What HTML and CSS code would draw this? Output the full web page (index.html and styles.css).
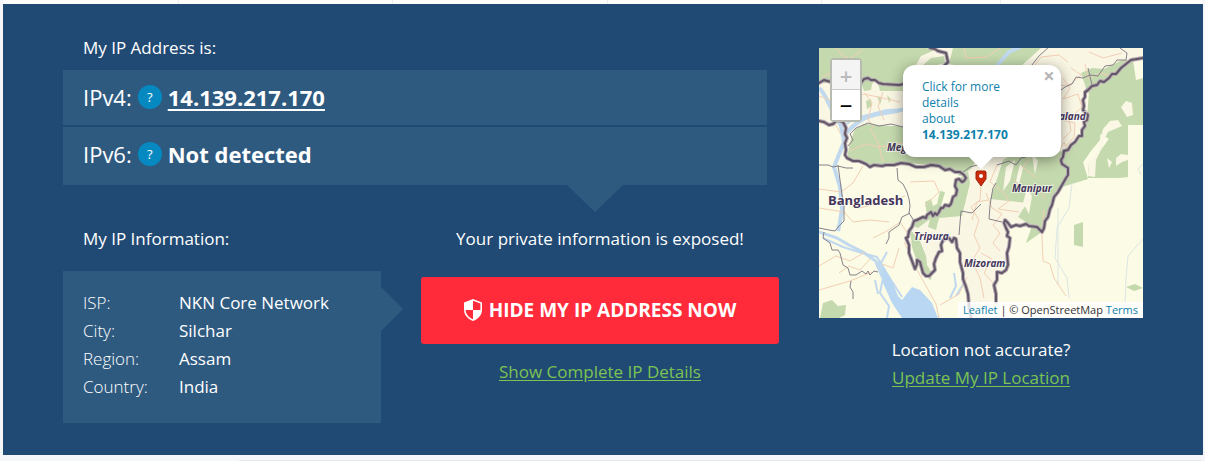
FILE: index.html
```html
<!DOCTYPE html>
<html lang="en">
<head>
<meta charset="utf-8">
<title>My IP Address</title>
<link rel="stylesheet" href="styles.css">
</head>
<body>
<div class="strip strip-top"><span></span><span></span><span></span><span></span><span></span><span></span></div>
<main class="panel">
  <div class="details">
    <h2 class="label">My IP Address is:</h2>
    <div class="addresses">
      <div class="address"><span class="version">IPv4:</span><button class="help" type="button" aria-label="About IPv4">?</button><a class="value" href="#">14.139.217.170</a></div>
      <div class="address"><span class="version">IPv6:</span><button class="help" type="button" aria-label="About IPv6">?</button><span class="value">Not detected</span></div>
    </div>
    <div class="lower">
      <section>
        <h2 class="label">My IP Information:</h2>
        <div class="info">
          <table>
            <tr><th scope="row">ISP:</th><td>NKN Core Network</td></tr>
            <tr><th scope="row">City:</th><td>Silchar</td></tr>
            <tr><th scope="row">Region:</th><td>Assam</td></tr>
            <tr><th scope="row">Country:</th><td>India</td></tr>
          </table>
        </div>
      </section>
      <section class="action">
        <p>Your private information is exposed!</p>
        <button class="hide-ip" type="button">
          <svg class="shield" viewBox="0 0 18 22" aria-hidden="true"><path d="M9 0 18 3.500V11c0 5-4 9-9 11-5-2-9-6-9-11V3.500z" fill="#fff"/><path d="M9 1.800 16.400 4.600V11H9zM9 11v9.200C5 18.500 1.800 15.200 1.600 11z" fill="#ff2b3a"/></svg>
          HIDE MY IP ADDRESS NOW</button>
        <a class="green" href="#">Show Complete IP Details</a>
      </section>
    </div>
  </div>
  <aside class="location">
    <div class="map">
      <svg class="tiles" viewBox="0 0 324 270" preserveAspectRatio="xMidYMid slice" role="img" aria-label="Map of Silchar and surroundings">
        <defs>
          <path id="borders" d="M0 35 5 32 12 34 25 33 42 35 45 31 49 30 52 32 56 32 60 35 64 36 80 37 91 35 120 23 129 14 127 5 119 3 116 1 111 0M0 73 5 74 10 77 14 76 18 72 24 74 27 80 26 86 28 90 26 95 27 102 26 107 28 110 34 113 40 113 47 116 51 119 55 117 63 118 67 117 75 117 82 115 90 116 97 119 105 119 112 117 120 118 126 122 131 121 136 124 141 124 145 127 147 130 145 133 143 134 140 131 137 132 136 138 138 142 137 147 134 149 132 156 130 158 126 157 124 160 122 160 120 164 118 167 116 165 114 168 112 164 108 167 107 170 104 169 98 172 95 173 93 179 90 183 89 189 87 190 90 197 90 205 93 213 96 221 98 216 98 212 101 214 104 225 107 228 110 228 116 222 115 216 117 210 120 204 123 203 122 197 124 192 130 190 133 194 135 190 137 191 138 200 141 205 141 214 144 225 144 231 147 239 149 246 150 258 152 270M324 10 318 11 312 12 307 16 302 20 297 26 293 26 290 30 285 34 281 33 278 37 273 38 268 43 266 44 266 49 264 52 265 58 264 62 269 67 268 72 265 74 266 78 263 82 263 88 260 88 256 94 252 97 249 102 245 103 244 109 242 112 243 116 249 120 249 127 247 130 243 137 239 144 235 149 233 157 231 161 229 169 226 173 225 180 223 184 218 179 210 178 207 176 201 178 197 177 192 179 189 175 186 172 185 175 187 180 189 184 188 188 191 190 190 199 188 205 189 217 187 222 183 225 178 224 178 232 175 237 177 246 177 254"/>
        </defs>
        <rect width="324" height="270" fill="#fcfbe5"/>
        <path d="M0 35 42 35 50 30 64 36 90 35 110 0H324V10L302 20 278 37 265 50 268 70 252 97 242 112 249 120 233 157 223 184 186 172 190 205 176 250 152 270 137 191 124 192 110 228 87 187 95 173 138 148 143 128 120 119 28 110 24 74 0 73z" fill="#faf6e4"/>
        <g fill="#c4d9ad">
          <path d="M0 0H108L125 6 126 15 110 19 102 23 90 43H61L58 31 53 36 52 42 45 43 42 35H0z"/>
          <path d="M134 0H222L202 18H141L130 16z"/>
          <path d="M31 94 36 81 46 76 60 77 70 78 82 78 95 86 150 98 160 108 152 121 141 128 132 122 120 118 90 115 55 118 28 111z"/>
          <path d="M262 25 273 20 285 21 303 12 314 12 317 32 324 30V77H309V129L300 130 269 130 270 116 280 105 290 91 292 76 282 79 281 92 272 103 265 113 250 121 243 106 253 97 264 87 268 70 278 50 268 43z"/>
          <path d="M270 44 308 40 309 129 269 130 270 116 280 105 290 91 280 85 262 113 250 121 243 106 264 87 268 70z"/>
          <path d="M243 103 272 99 264 114 269 131 243 139 237 143 223 184 207 195 213 178 199 169 208 155 171 151 177 134 184 112 196 105 222 108z"/>
          <path d="M108 167 106 154 112 151 114 158 118 156 121 143 126 144 122 158 135 153 136 135 149 123 151 135 143 168 120 170 117 182 109 179 111 171 99 180 94 178 98 173z"/>
          <path d="M91 181 101 193 107 208 108 217 113 225 112 232 105 228 98 214 93 199z"/>
          <path d="M255 177 264 174V199L255 197zM307 239 316 236 324 240 315 243zM4 255 13 252 19 258 27 257 26 267 20 270H1z"/>
          <path d="M47 53 52 51 53 58 48 61zM58 48 63 50 61 57zM68 47 72 51 70 55z"/>
        </g>
        <g fill="#faf7e5">
          <path d="M97 17 102 8 116 2 124 4 126 8 112 10 104 17zM284 81 291 73 299 72 303 78 296 81 289 84 285 92 281 104 277 112 276 129 269 128 270 116 279 103zM302 59 307 53 313 55 314 67 308 69zM297 110 302 106 309 107V112L303 114 297 118zM288 110 293 114 290 120z"/>
          <path d="M187 119 196 112 191 133 184 143zM201 116 204 120 200 136 197 133zM213 107 219 112 216 126zM208 140 213 148 210 166 204 155z"/>
        </g>
        <g fill="none" stroke="#c0d9ee" stroke-linejoin="round">
          <path d="M0 40C8 47 8 56 22 78L25 94 15 119 21 139 23 160 21 174 19 183" stroke-width="4"/>
          <path d="M26 86C37 75 43 70 55 67S82 65 102 55L174 22 190 4 203-2" stroke-width="4"/>
          <path d="M21 80 37 70 68 62 91 61" stroke-width="2"/>
          <path d="M0 184 18 190 30 197 44 204 58 214" stroke-width="3"/>
          <path d="M58 214 64 228 75 250 82 262 92 270" stroke-width="5"/>
          <path d="M4 190 24 199 43 205 58 209 72 232 83 249" stroke-width="2"/>
          <path d="M62 215 68 204M64 230 61 245 70 258 68 270M56 232 59 246M135 225 137 238 131 250M145 235 137 248" stroke-width="2"/>
        </g>
        <path d="M63 217 73 233 79 248 83 252 93 239 101 242 113 255 119 270H83L73 255 64 235z" fill="#b9d7f2"/>
        <g fill="none" stroke="#dbe6e4"><path d="M324 116 319 121 322 127M324 191 309 208 307 230 306 258M253 135 250 160 238 180 236 210 248 230 250 250M239 160 239 237"/></g>
        <g fill="none" stroke="#f3cfb4" stroke-linejoin="round">
          <path d="M0 48 13 53 29 54 45 46 64 50 81 54M16 58 13 70 21 85M46 45 53 55 49 71 55 80M64 44 59 58 65 72M31 103 46 96 61 99 84 95M51 80 59 94 64 114M0 141 22 144 34 135 44 118M0 160 25 164 34 174 51 172 70 174M25 151 40 160 66 154 86 148M54 190 68 183 81 174 89 186M46 204 31 213 17 208 0 218M20 225 30 218 41 222 51 211M80 200 74 220 63 216M0 242 31 233 53 224M85 194 97 220 107 238 117 256 120 270M121 257 140 246 148 229"/>
          <path d="M162 138 161 152 152 159 160 172 155 187 161 200 153 213 161 230 165 250M167 145 173 160 183 166 174 177 181 185 174 195 181 203M169 152 158 154 153 172M162 205 173 211 165 225 174 235M195 132 203 143 218 140 226 150M213 107 204 119 216 129M225 162 223 188 224 213 231 216 235 230 247 248M178 117 171 134 185 145 190 153 179 161 200 164M244 30 251 40 244 51 259 46 263 59 250 71 252 83 244 91M266 16 269 30 282 25 292 28 307 13M241 72 256 75 255 89 247 98M252 20 262 27 252 36 241 38M91 134 115 133 120 144 106 158M250 105 245 94 239 104"/>
          <path d="M17 0 24 8 31 11 43 2M145 0 147 10 168 9 181 0M3 29 17 22 33 26M214 20 222 9 240 7 249 14M270 4 284 10 303 5"/>
        </g>
        <g fill="none" stroke="#87818a" stroke-linejoin="round">
          <path d="M29 98 34 92 31 86 37 80 49 75 60 78 72 76 84 79 97 87M209 22 220 8 231-2M242 42 246 39 253 36 257 29 264 30 271 27 279 28 286 18 294 17 298 12 307 12 308 5 301 0M0 117 9 117 14 119 19 118 27 120 34 120M78 120 79 132 84 136 88 144 90 151 91 158 90 165 95 173M91 165 83 169 80 177 70 184 70 190 67 196M19 117 23 147 25 157 25 173 20 178 16 183 10 182 0 180M5 184 4 190 11 195 13 202 19 202 21 205 24 217 29 220 31 227 37 227 43 223 47 226 49 223 51 227 55 223 59 224M32 233 31 239 34 244 34 251M269 20 273 37 266 42M178 117 190 113 193 115 197 117 202 110 207 109M177 135 174 140 172 151 171 158 170 171 183 174M142 163 140 187M142 163 153 165 162 156M143 125 151 119 162 116"/>
        </g>
        <g fill="none" stroke-linejoin="round" stroke-linecap="round">
          <use href="#borders" stroke="#b5a9b3" stroke-width="4"/>
          <use href="#borders" stroke="#625767" stroke-width="2"/>
        </g>
        <g class="place">
          <text x="68" y="103">Meghalaya</text><text x="221" y="72">Nagaland</text><text x="193" y="144">Manipur</text><text x="95" y="192">Tripura</text><text x="145" y="219">Mizoram</text>
          <text class="country" x="9" y="157">Bangladesh</text>
        </g>
        <path d="M158 123h8l1 1v7l-5 7-5-7v-7z" fill="#cb2c0c" stroke="#a12308"/><circle cx="162" cy="128" r="2" fill="#fff"/>
      </svg>
      <div class="zoom"><button type="button" disabled aria-label="Zoom in">+</button><button type="button" aria-label="Zoom out">−</button></div>
      <div class="popup"><button class="close" type="button" aria-label="Close">×</button><a href="#">Click for more details<br>about <b>14.139.217.170</b></a></div>
      <div class="credit"><a href="#">Leaflet</a> | © OpenStreetMap <a href="#">Terms</a></div>
    </div>
    <p>Location not accurate?</p>
    <a class="green" href="#">Update My IP Location</a>
  </aside>
</main>
<div class="strip strip-bottom"></div>
</body>
</html>
```
FILE: styles.css
```css
* { box-sizing: border-box; }
body {
  margin: 0;
  background: #f5f6fa;
  color: #fff;
  font: 17px/28px "Open Sans", "Noto Sans", sans-serif;
}
p, h2 { margin: 0; font-size: inherit; font-weight: 400; }
button { padding: 0; border: 0; font: inherit; cursor: pointer; }
.strip { height: 4px; margin: 0 3px; }
.strip-top {
  display: grid;
  grid-template-columns: 175px 214px 215px 214px 179px 1fr;
  background: #fdfdfe;
}
.strip-top span + span { border-left: 1px solid #ececf1; }
.strip-bottom { height: 6px; margin-left: 239px; border-bottom: 1px solid #e3ebeb; }
.panel {
  display: grid;
  grid-template-columns: 1fr 30%;
  gap: 40px;
  margin: 0 2px 0 3px;
  padding: 30px 60px 32px;
  background: #204a73;
}
.label { padding-left: 20px; }
.addresses {
  position: relative;
  display: grid;
  gap: 2px;
  margin: 8px 12px 40px 0;
}
.addresses::after {
  content: "";
  position: absolute;
  top: 100%;
  right: 144px;
  border: solid transparent;
  border-width: 27px 28px 0;
  border-top-color: #2e5a80;
}
.address {
  display: flex;
  align-items: center;
  gap: 6px;
  padding: 11px 20px 12px;
  background: #2e5a80;
  font-size: 22px;
  line-height: 32px;
}
.address:last-child { padding-bottom: 15px; }
.value { color: #fff; font-weight: 700; text-underline-offset: 3px; }
.help {
  width: 24px;
  height: 24px;
  border-radius: 50%;
  background: #0688c1;
  color: #fff;
  font-size: 13px;
  line-height: 24px;
}
.lower {
  display: grid;
  grid-template-columns: 318fr 358fr;
  gap: 40px;
}
.info {
  position: relative;
  margin-top: 18px;
  padding: 18px 20px 22px;
  background: #2e5a80;
}
.info::after {
  content: "";
  position: absolute;
  left: 100%;
  top: 16px;
  border: solid transparent;
  border-width: 22px 0 22px 22px;
  border-left-color: #2e5a80;
}
table { border-collapse: collapse; font-size: 17px; }
th, td { padding: 0; text-align: left; }
th { width: 96px; font-weight: 300; }
.action, .location { text-align: center; }
.hide-ip {
  display: flex;
  align-items: center;
  justify-content: center;
  gap: 7px;
  width: 100%;
  margin: 24px 0 14px;
  padding: 19px 0 20px;
  border-radius: 3px;
  background: #ff2b3a;
  color: #fff;
  font-size: 19px;
  font-weight: 700;
}
.shield { width: 18px; height: 22px; }
.green { color: #7cc353; text-underline-offset: 2px; }
.location { padding-top: 14px; }
.map {
  position: relative;
  margin-bottom: 18px;
  color: #333;
  font-size: 12px;
  line-height: 16px;
}
.tiles { display: block; width: 100%; }
.place {
  fill: #44365a;
  stroke: #fff;
  stroke-opacity: 0.6;
  stroke-width: 2px;
  paint-order: stroke;
  font-size: 10px;
  font-style: italic;
  font-weight: 700;
}
.country { font-size: 13px; font-style: normal; }
.map a { color: #0e81ac; text-decoration: none; }
.zoom {
  position: absolute;
  top: 10px;
  left: 11px;
  border: 2px solid #b8bbb2;
  border-radius: 4px;
}
.zoom button {
  display: block;
  width: 28px;
  height: 30px;
  background: #fff;
  color: #000;
  font-size: 22px;
  font-weight: 600;
  line-height: 28px;
}
.zoom button:disabled { background: #f4f4f4; color: #bbb; border-bottom: 1px solid #ccc; }
.popup {
  position: absolute;
  top: 17px;
  left: calc(50% - 78px);
  width: 158px;
  padding: 14px 52px 14px 19px;
  border-radius: 12px;
  background: #fff;
  box-shadow: 0 3px 14px rgba(0, 0, 0, 0.4);
  text-align: left;
}
.popup b { display: block; }
.popup::after {
  content: "";
  position: absolute;
  top: 100%;
  left: 66px;
  border: solid transparent;
  border-width: 12px 12px 0;
  border-top-color: #fff;
}
.close {
  position: absolute;
  top: 3px;
  right: 5px;
  width: 14px;
  background: none;
  color: #b5b5b5;
  font-size: 20px;
  font-weight: 700;
}
.credit {
  position: absolute;
  right: 0;
  bottom: 0;
  padding: 0 5px;
  background: rgba(255, 255, 255, 0.8);
  font-size: 11px;
}
```
